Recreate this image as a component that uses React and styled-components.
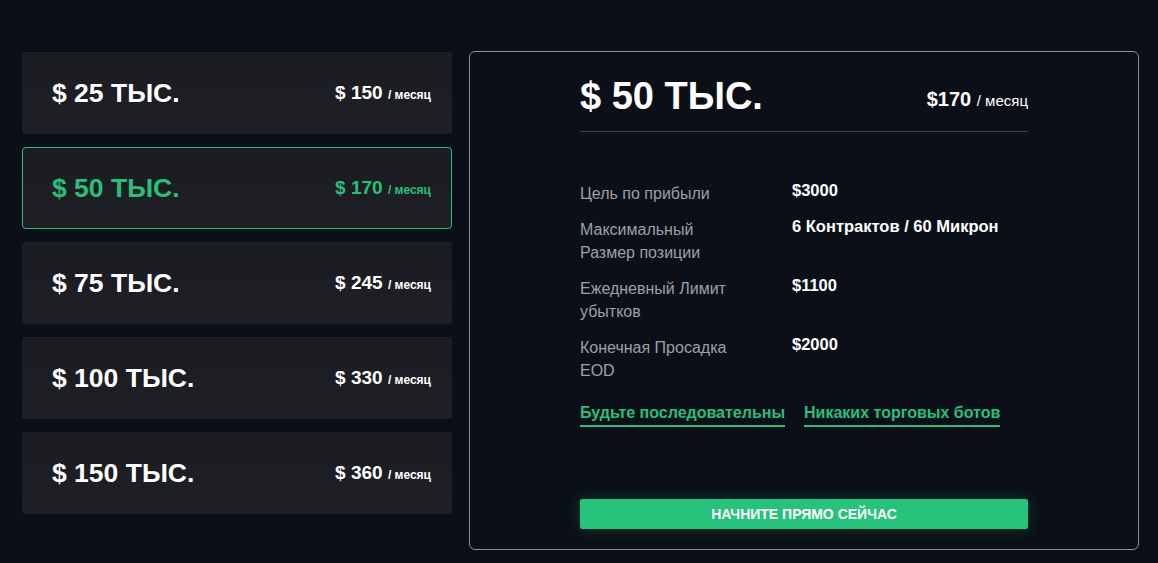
import React from "react";
import styled, { createGlobalStyle } from "styled-components";

const GlobalStyle = createGlobalStyle`
  html, body {
    margin: 0;
    padding: 0;
    background: #0b1018;
    font-family: "Liberation Sans", Arial, sans-serif;
  }
`;

const Page = styled.div`
  display: flex;
  align-items: flex-start;
  gap: 17px;
  padding: 51px 0 0 22px;
  height: 563px;
  box-sizing: border-box;
`;

const PlanList = styled.div`
  display: flex;
  flex-direction: column;
  gap: 13px;
  width: 430px;
  padding-top: 1px;
`;

const PlanCard = styled.div`
  display: flex;
  align-items: center;
  justify-content: space-between;
  height: 82px;
  box-sizing: border-box;
  padding: 0 20px 0 29px;
  border-radius: 4px;
  background: linear-gradient(180deg, #1a1c21 0%, #1e2025 100%);
  border: 1px solid ${(p) => (p.$active ? "#27c07a" : "transparent")};
  color: ${(p) => (p.$active ? "#27c07a" : "#ffffff")};
`;

const PlanSize = styled.div`
  font-size: 26.5px;
  font-weight: 700;
`;

const PlanPrice = styled.div`
  font-size: 19px;
  font-weight: 700;
  span {
    font-size: 12px;
  }
`;

const Panel = styled.div`
  width: 670px;
  height: 499px;
  box-sizing: border-box;
  border: 1px solid #8a8f98;
  border-radius: 6px;
  display: flex;
  justify-content: center;
  padding: 20px 0 20px;
`;

const PanelInner = styled.div`
  width: 448px;
  display: flex;
  flex-direction: column;
`;

const PanelHead = styled.div`
  display: flex;
  align-items: center;
  justify-content: space-between;
  padding-bottom: 11px;
  border-bottom: 1px solid #3a3d45;
  color: #ffffff;
`;

const BigSize = styled.div`
  font-size: 38px;
  font-weight: 700;
  line-height: 48px;
`;

const BigPrice = styled.div`
  font-size: 20px;
  font-weight: 700;
  padding-top: 6px;
  span {
    font-size: 15px;
    font-weight: 400;
  }
`;

const Rules = styled.div`
  display: flex;
  flex-direction: column;
  gap: 10px;
  margin-top: 47px;
`;

const Rule = styled.div`
  display: grid;
  grid-template-columns: 212px 1fr;
`;

const RuleLabel = styled.div`
  color: #9ca0a7;
  font-size: 16px;
  line-height: 23px;
  width: 160px;
  padding-top: 3px;
`;

const RuleValue = styled.div`
  color: #ffffff;
  font-size: 16.5px;
  font-weight: 700;
  line-height: 23px;
`;

const Tags = styled.div`
  display: flex;
  gap: 19px;
  margin-top: 22px;
`;

const Tag = styled.div`
  color: #27c07a;
  font-size: 16px;
  font-weight: 700;
  padding-bottom: 3px;
  border-bottom: 2px solid #27c07a;
`;

const StartButton = styled.button`
  margin-top: auto;
  height: 30px;
  border: none;
  border-radius: 2px;
  background: #27c27b;
  color: #ffffff;
  font-family: inherit;
  font-size: 14px;
  font-weight: 700;
  text-transform: uppercase;
  box-shadow: 0 0 14px rgba(39, 194, 123, 0.25);
  cursor: pointer;
`;

const plans = [
  { size: "25", price: "150" },
  { size: "50", price: "170", active: true },
  { size: "75", price: "245" },
  { size: "100", price: "330" },
  { size: "150", price: "360" },
];

const rules = [
  ["Цель по прибыли", "$3000"],
  ["Максимальный Размер позиции", "6 Контрактов / 60 Микрон"],
  ["Ежедневный Лимит убытков", "$1100"],
  ["Конечная Просадка EOD", "$2000"],
];

export default function App() {
  return (
    <>
      <GlobalStyle />
      <Page>
        <PlanList>
          {plans.map((p) => (
            <PlanCard key={p.size} $active={p.active}>
              <PlanSize>$ {p.size} ТЫС.</PlanSize>
              <PlanPrice>
                $ {p.price} <span>/ месяц</span>
              </PlanPrice>
            </PlanCard>
          ))}
        </PlanList>
        <Panel>
          <PanelInner>
            <PanelHead>
              <BigSize>$ 50 ТЫС.</BigSize>
              <BigPrice>
                $170 <span>/ месяц</span>
              </BigPrice>
            </PanelHead>
            <Rules>
              {rules.map(([label, value]) => (
                <Rule key={label}>
                  <RuleLabel>{label}</RuleLabel>
                  <RuleValue>{value}</RuleValue>
                </Rule>
              ))}
            </Rules>
            <Tags>
              <Tag>Будьте последовательны</Tag>
              <Tag>Никаких торговых ботов</Tag>
            </Tags>
            <StartButton>Начните прямо сейчас</StartButton>
          </PanelInner>
        </Panel>
      </Page>
    </>
  );
}
